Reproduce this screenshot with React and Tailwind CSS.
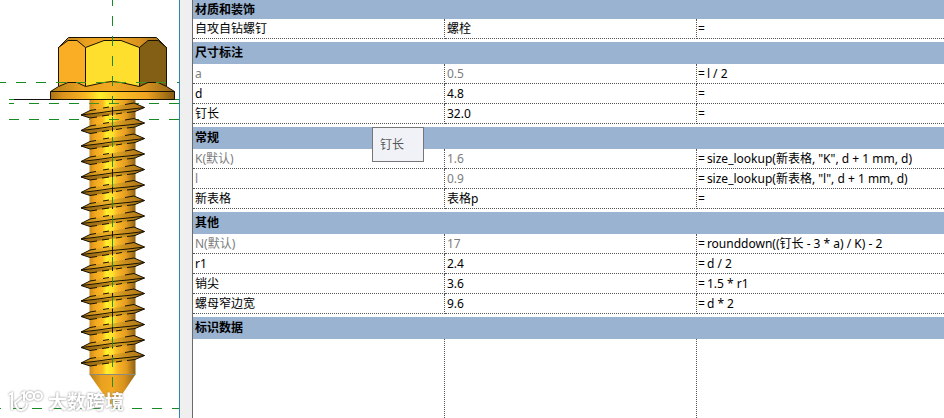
const groups = [
  {
    title: '材质和装饰',
    rows: [{ name: '自攻自钻螺钉', value: '螺栓', formula: '' }]
  },
  {
    title: '尺寸标注',
    rows: [
      { name: 'a', value: '0.5', formula: 'l / 2', locked: true },
      { name: 'd', value: '4.8', formula: '' },
      { name: '钉长', value: '32.0', formula: '' }
    ]
  },
  {
    title: '常规',
    rows: [
      { name: 'K(默认)', value: '1.6', formula: 'size_lookup(新表格, "K", d + 1 mm, d)', locked: true },
      { name: 'l', value: '0.9', formula: 'size_lookup(新表格, "l", d + 1 mm, d)', locked: true },
      { name: '新表格', value: '表格p', formula: '' }
    ]
  },
  {
    title: '其他',
    rows: [
      { name: 'N(默认)', value: '17', formula: 'rounddown((钉长 - 3 * a) / K) - 2', locked: true },
      { name: 'r1', value: '2.4', formula: 'd / 2' },
      { name: '销尖', value: '3.6', formula: '1.5 * r1' },
      { name: '螺母窄边宽', value: '9.6', formula: 'd * 2' }
    ]
  },
  { title: '标识数据', rows: [] }
]

const threads = Array.from({ length: 17 }, (_, i) => i * 15.5)

const Thread = ({ y }) => (
  <g transform={`translate(0 ${y})`}>
    <path d="M81 115 L90 110.500 L134 103 L144.500 107.500 L112 112 Z" fill="url(#threadTop)" />
    <path d="M81 115 L112 112 L144.500 107.500 L135 111.500 L90 118 Z" fill="url(#threadBottom)" />
    <path
      d="M90 110.500 L81 115 L98 113 L112 111 L128 109.500 L144.500 107.500 M81 115 L90 118 L97 117 M134 103 L144.500 107.500 L135 111.500 L127 112.500"
      fill="none"
      stroke="#1a1200"
    />
    <path d="M90 110.500 L96 109.500 M103 108 L109 107 M125 104.500 L134 103 M102 116 L109 115 M116 114 L122 113" stroke="#1a1200" />
    <path d="M112.500 107 V116" stroke="#1a1200" />
  </g>
)

const Screw = () => (
  <svg viewBox="0 0 179 418" className="block w-full" role="img" aria-label="自攻自钻螺钉">
    <defs>
      <linearGradient id="shaft">
        <stop offset="0" stopColor="#c98a1c" />
        <stop offset="0.12" stopColor="#f3a61f" />
        <stop offset="0.28" stopColor="#fbb823" />
        <stop offset="0.37" stopColor="#fff02c" />
        <stop offset="0.5" stopColor="#ffe02c" />
        <stop offset="0.62" stopColor="#f9b426" />
        <stop offset="0.8" stopColor="#e39c20" />
        <stop offset="1" stopColor="#8d6114" />
      </linearGradient>
      <linearGradient id="flange">
        <stop offset="0" stopColor="#a87215" />
        <stop offset="0.1" stopColor="#dc931d" />
        <stop offset="0.28" stopColor="#fbb523" />
        <stop offset="0.4" stopColor="#fff02c" />
        <stop offset="0.55" stopColor="#fbc026" />
        <stop offset="0.78" stopColor="#eea321" />
        <stop offset="1" stopColor="#835a10" />
      </linearGradient>
      <linearGradient id="cone">
        <stop offset="0" stopColor="#b37c1a" />
        <stop offset="0.25" stopColor="#e8a01f" />
        <stop offset="0.5" stopColor="#f2aa22" />
        <stop offset="0.75" stopColor="#d9931f" />
        <stop offset="1" stopColor="#94671a" />
      </linearGradient>
      <linearGradient id="threadTop">
        <stop offset="0" stopColor="#b37b1a" />
        <stop offset="0.35" stopColor="#e9ac24" />
        <stop offset="0.5" stopColor="#e5b025" />
        <stop offset="0.7" stopColor="#c98c1d" />
        <stop offset="1" stopColor="#a87319" />
      </linearGradient>
      <linearGradient id="threadBottom">
        <stop offset="0" stopColor="#8d6113" />
        <stop offset="0.4" stopColor="#b58018" />
        <stop offset="0.6" stopColor="#d39a1e" />
        <stop offset="1" stopColor="#936615" />
      </linearGradient>
    </defs>

    {/* reference planes behind the body */}
    <g stroke="#168a25" fill="none">
      <path d="M0 82.500 H6 M16 82.500 H26 M36 82.500 H46 M177 82.500 H179" />
      <path d="M9 103.500 H14 M29 103.500 H179" strokeDasharray="10" />
      <path d="M9 119.500 H179" strokeDasharray="10" />
    </g>
    <path d="M9 99.500 H174" stroke="#111" />
    <path d="M9 99.500 H14 M174 99.500 H179" stroke="#168a25" />

    {/* hex head */}
    <path d="M68.500 37.500 H156.500 L166.500 47.500 V86.500 H58.500 V47.500 Z" fill="url(#cone)" stroke="#1a1200" />
    <path d="M58.500 47.500 L68 40.500 H77 L85.500 47.500 V88 H58.500 Z" fill="#f9ae25" />
    <path d="M85.500 47.500 L104 40.500 H121 L139.500 47.500 V88 H85.500 Z" fill="#ffdf2e" />
    <path d="M139.500 47.500 L148 40.500 H158 L166.500 47.500 V88 H139.500 Z" fill="#835e15" />
    <path
      d="M50.500 91.500 L58.500 86.500 L68 82.500 H77 L85.500 86.500 L104 82.500 L112 81.500 L121 82.500 L139.500 86.500 L148 82.500 H158 L166.500 86.500 L174.500 91.500 Z"
      fill="url(#cone)"
    />
    <path d="M50.500 91.500 H174.500 V99.500 H50.500 Z" fill="url(#flange)" stroke="#1a1200" />
    <path
      d="M58.500 47.500 L68 40.500 H77 L85.500 47.500 L104 40.500 H121 L139.500 47.500 L148 40.500 H158 L166.500 47.500 M58.500 47 V86 M166.500 47 V86 M85.500 47.500 V86 M139.500 47.500 V86 M50.500 91.500 L58.500 86.500 L68 82.500 H77 L85.500 86.500 L104 82.500 L112 81.500 L121 82.500 L139.500 86.500 L148 82.500 H158 L166.500 86.500 L174.500 91.500"
      fill="none"
      stroke="#1a1200"
    />
    <path d="M56 82.500 H66 M76 82.500 H86 M96 82.500 H106 M116 82.500 H126 M136 82.500 H146 M156 82.500 H166" stroke="#3c9420" />

    {/* shank, threads and tip */}
    <rect x="89.500" y="100" width="46" height="274.500" fill="url(#shaft)" />
    <path d="M90 103.500 H99 M109 103.500 H119 M129 103.500 H136" stroke="#3c9420" />
    {threads.map((y) => (
      <Thread key={y} y={y} />
    ))}
    <path d="M109 119.500 H119" stroke="#3c9420" />
    <path d="M89.500 374.500 H135.500 L113 408 Z" fill="url(#cone)" />
    <path d="M89.500 374.500 H135.500" stroke="#8d8b7c" />
    <path d="M112.500 0 V6 M112.500 16 V26 M112.500 36 V46 M112.500 56 V66 M112.500 76 V86 M112.500 96 V104" stroke="#168a25" />
    <path d="M112.500 117 V405" stroke="#268c20" strokeDasharray="10" />
    <path d="M0 408.500 H1 M12 408.500 H179" stroke="#168a25" strokeDasharray="10" />
  </svg>
)

const Watermark = () => (
  <div className="absolute bottom-1 left-2 flex items-center gap-1 text-white drop-shadow-[0_0_1px_#888]">
    <svg viewBox="0 0 36 24" className="h-6 w-9" fill="none" stroke="currentColor" strokeWidth="2">
      <path d="M1 5 L4 3 V20 M14 7 L7 13 Q9 21 14 20 Q19 19 19 13" />
      <path d="M13 4 L16 2 V11" />
      <circle cx="22" cy="6" r="4" />
      <circle cx="30" cy="6" r="4" />
    </svg>
    <span className="text-[19px] leading-6 font-bold">大数跨境</span>
  </div>
)

const ParameterRow = ({ row }) => (
  <tr className={row.locked ? 'h-5 text-[#7d7d7d]' : 'h-5'}>
    <th scope="row" className="border-r border-b border-dotted border-[#555] pl-0.5 text-left font-normal">
      {row.name}
    </th>
    <td className="border-r border-b border-dotted border-[#555] pl-0.5">{row.value}</td>
    <td className="border-b border-dotted border-[#555] pl-px text-black">
      <span className="flex gap-0.5">
        <span>=</span>
        <span>{row.formula}</span>
      </span>
    </td>
  </tr>
)

const ParameterTable = () => (
  <table className="w-full table-fixed border-separate border-spacing-0 text-xs leading-[18px]">
    <colgroup>
      <col className="w-[252px]" />
      <col className="w-[252px]" />
      <col />
    </colgroup>
    {groups.map((group, index) => (
      <tbody key={group.title}>
        <tr className={index === 0 ? 'h-[19px]' : 'h-[22px]'}>
          <th colSpan={3} scope="colgroup" className="bg-[#9ab3d0] pl-0.5 text-left font-bold">
            {group.title}
          </th>
        </tr>
        {group.rows.map((row) => (
          <ParameterRow key={row.name} row={row} />
        ))}
        {group.rows.length > 0 && (
          <tr className="h-[3px]">
            <td colSpan={3} />
          </tr>
        )}
      </tbody>
    ))}
  </table>
)

const App = () => {
  return (
    <main className="flex h-screen overflow-hidden bg-white font-['Noto_Sans','Noto_Sans_CJK_SC',sans-serif] text-black">
      <section className="relative w-[180px] shrink-0 border-r border-[#2e86b5]">
        <Screw />
        <Watermark />
      </section>
      <div className="w-3 shrink-0 bg-[#efefef]" />
      <section className="relative flex min-w-0 flex-1 flex-col border-l border-[#6b6b6b]">
        <ParameterTable />
        {/* empty space below the last group keeps the column rules */}
        <div className="flex flex-1">
          <div className="w-[252px] border-r border-dotted border-[#555]" />
          <div className="w-[252px] border-r border-dotted border-[#555]" />
        </div>
        <div
          role="tooltip"
          className="absolute top-[127px] left-[179px] flex h-[35px] w-[52px] items-center border border-[#767676] bg-[#f1f2f7] pl-[7px] text-xs text-[#575757]"
        >
          钉长
        </div>
      </section>
    </main>
  )
}

export default App
